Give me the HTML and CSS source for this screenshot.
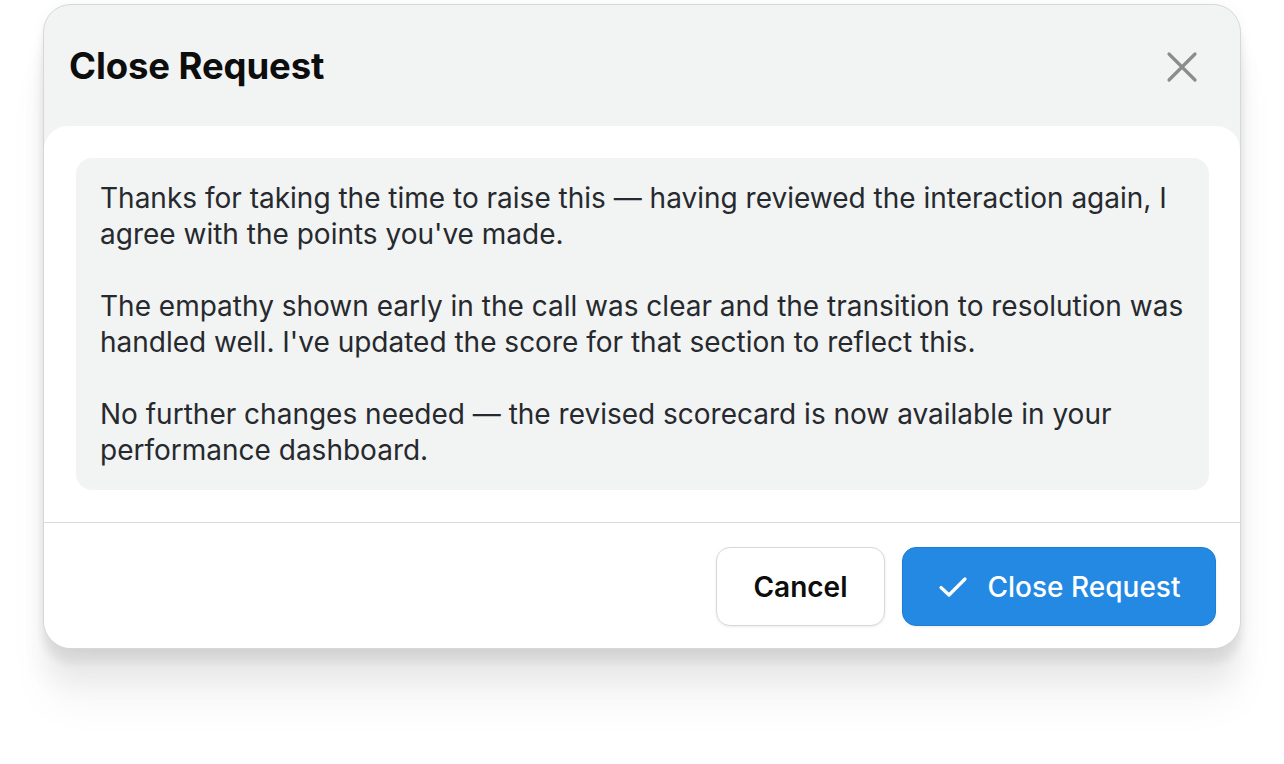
FILE: index.html
```html
<!DOCTYPE html>
<html>
<head>
<meta charset="utf-8">
<link rel="stylesheet" href="styles.css">
</head>
<body>
<div class="dialog">
  <div class="header">
    <h1 class="title">Close Request</h1>
    <button class="close-btn" aria-label="Close">
      <svg width="32" height="32" viewBox="0 0 32 32"><path d="M3 3 L29 29 M29 3 L3 29" stroke="#8c8c8c" stroke-width="3.2" stroke-linecap="round" fill="none"/></svg>
    </button>
  </div>
  <div class="body">
    <div class="message">
      <p>Thanks for taking the time to raise this — having reviewed the interaction again, I agree with the points you've made.</p>
      <p>The empathy shown early in the call was clear and the transition to resolution was handled well. I've updated the score for that section to reflect this.</p>
      <p>No further changes needed — the revised scorecard is now available in your performance dashboard.</p>
    </div>
  </div>
  <div class="footer">
    <button class="btn btn-cancel">Cancel</button>
    <button class="btn btn-primary">
      <svg width="30" height="30" viewBox="0 0 30 30"><path d="M3 15.5 L11 23 L27 7" stroke="#fff" stroke-width="3.2" stroke-linecap="round" stroke-linejoin="round" fill="none"/></svg>
      <span>Close Request</span>
    </button>
  </div>
</div>
</body>
</html>
```
FILE: styles.css
```css
html, body {
  margin: 0;
  padding: 0;
  background: #ffffff;
}
body {
  padding: 4px 43px 0 43px;
  min-height: 764px;
  box-sizing: border-box;
  font-family: Inter, "Noto Sans", sans-serif;
}
.dialog {
  width: 1198px;
  box-sizing: border-box;
  border: 1px solid #d6d7d7;
  border-radius: 28px;
  background: #f2f3f3;
  overflow: hidden;
  box-shadow:
    0 14px 8px rgba(0,0,0,0.07),
    0 34px 24px rgba(0,0,0,0.05),
    0 56px 40px rgba(0,0,0,0.04),
    0 0 14px rgba(0,0,0,0.04);
}
.header {
  height: 121px;
  display: flex;
  align-items: center;
  justify-content: space-between;
  padding: 0 42px 0 25px;
}
.title {
  margin: 0;
  font-size: 36.5px;
  font-weight: 700;
  color: #0d0d0d;
  letter-spacing: -0.1px;
  position: relative;
  top: 0px;
}
.close-btn {
  border: 0;
  background: transparent;
  padding: 0;
  width: 32px;
  height: 32px;
  display: flex;
  cursor: pointer;
  position: relative;
  top: 1px;
}
.body {
  background: #ffffff;
  border-radius: 24px 24px 0 0;
  padding: 32px 31px 32px 32px;
  border-bottom: 1px solid #dcdcdc;
}
.message {
  background: #f2f3f3;
  border-radius: 16px;
  padding: 22px 24px;
  font-size: 28px;
  line-height: 36px;
  color: #26292d;
}
.message p {
  margin: 0;
}
.message p + p {
  margin-top: 36px;
}
.footer {
  background: #ffffff;
  display: flex;
  justify-content: flex-end;
  gap: 17px;
  padding: 24px 24px 22px 24px;
}
.btn {
  height: 79px;
  border-radius: 14px;
  font-family: Inter, "Noto Sans", sans-serif;
  font-size: 28px;
  display: flex;
  align-items: center;
  justify-content: center;
  box-sizing: border-box;
  cursor: pointer;
}
.btn-cancel {
  width: 169px;
  background: #ffffff;
  border: 1px solid #d8d8d8;
  color: #0d0d0d;
  font-weight: 600;
  box-shadow: 0 1px 3px rgba(0,0,0,0.08);
}
.btn-primary {
  width: 314px;
  background: #2389e3;
  border: 1px solid #1f7ed3;
  color: #ffffff;
  font-weight: 500;
  gap: 20px;
  box-shadow: 0 1px 3px rgba(0,0,0,0.08);
}
```
